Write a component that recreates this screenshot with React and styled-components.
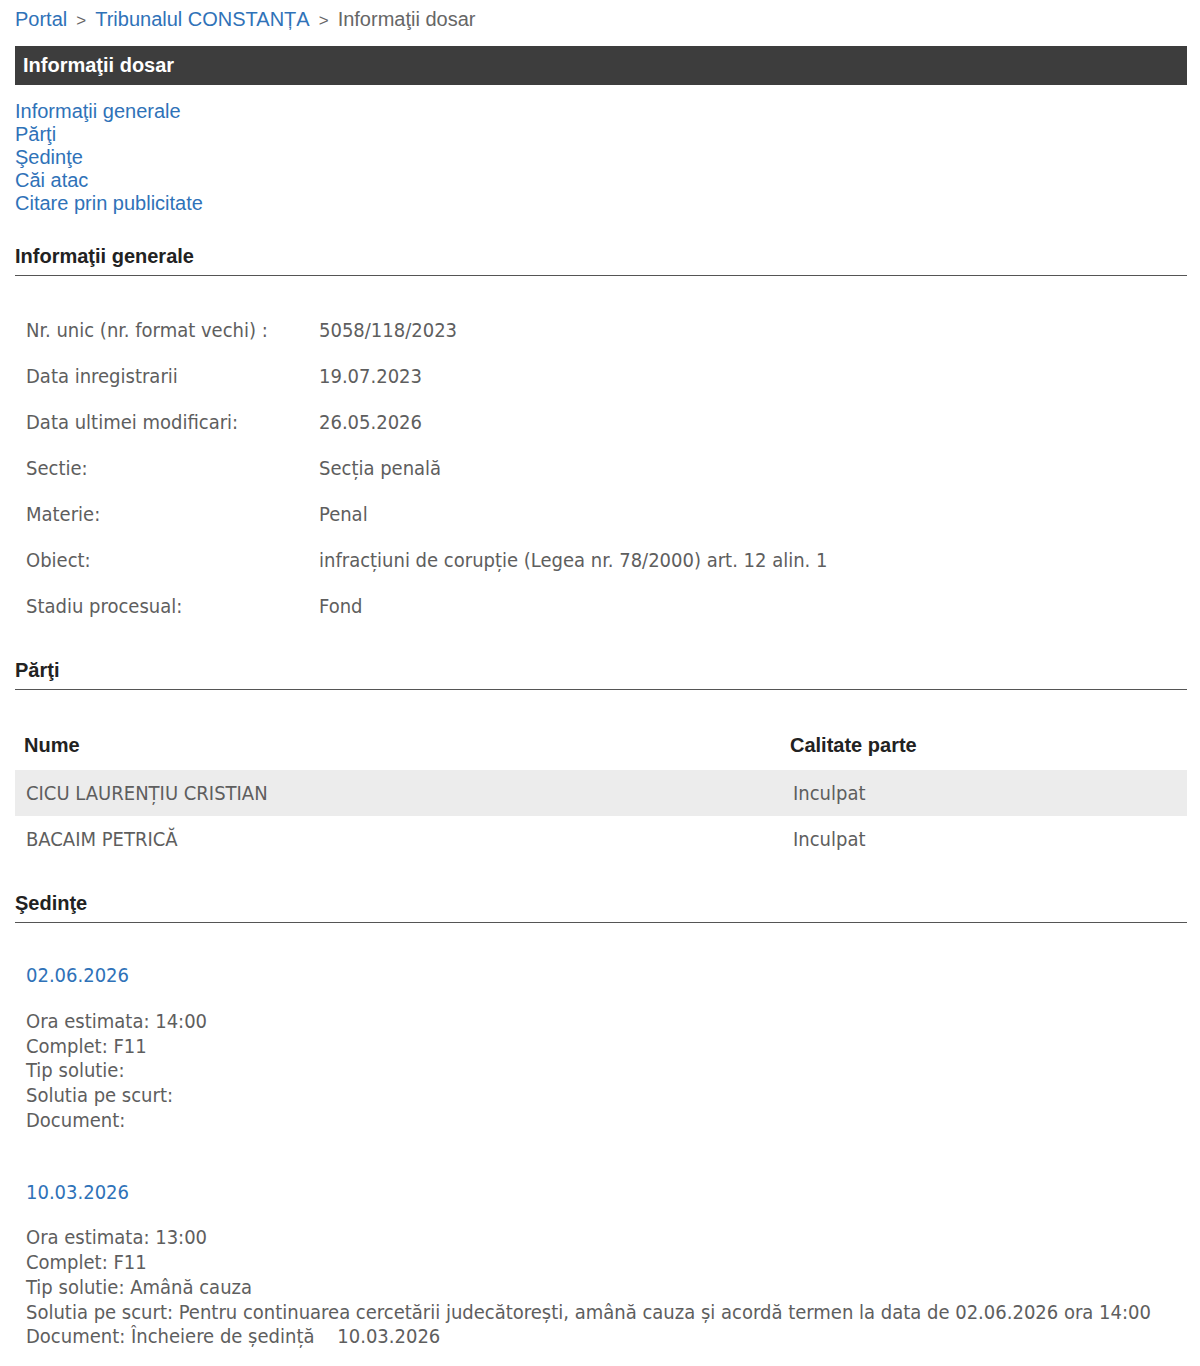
import React from 'react'
import styled, { createGlobalStyle } from 'styled-components'

const GlobalStyle = createGlobalStyle`
  body {
    margin: 0;
    background: #fff;
    font-family: "Liberation Sans", Arial, sans-serif;
  }
`;

const dosar = {
  general: [
    ['Nr. unic (nr. format vechi) :', '5058/118/2023'],
    ['Data inregistrarii', '19.07.2023'],
    ['Data ultimei modificari:', '26.05.2026'],
    ['Sectie:', 'Secția penală'],
    ['Materie:', 'Penal'],
    ['Obiect:', 'infracțiuni de corupție (Legea nr. 78/2000) art. 12 alin. 1'],
    ['Stadiu procesual:', 'Fond'],
  ],
  parti: [
    ['CICU LAURENȚIU CRISTIAN', 'Inculpat'],
    ['BACAIM PETRICĂ', 'Inculpat'],
  ],
  sedinte: [
    {
      data: '02.06.2026',
      ora: '14:00',
      complet: 'F11',
      tip: '',
      solutie: '',
      document: '',
    },
    {
      data: '10.03.2026',
      ora: '13:00',
      complet: 'F11',
      tip: 'Amână cauza',
      solutie: 'Pentru continuarea cercetării judecătorești, amână cauza și acordă termen la data de 02.06.2026 ora 14:00',
      document: 'Încheiere de ședință\u00a0\u00a0\u00a0\u00a010.03.2026',
    },
  ],
};

function Dosar() {
  return (
    <Page>
      <GlobalStyle />
      <Breadcrumb>
        <Crumb href="#">Portal</Crumb>
        <Sep>&gt;</Sep>
        <Crumb href="#">Tribunalul CONSTANȚA</Crumb>
        <Sep>&gt;</Sep>
        <Current>Informaţii dosar</Current>
      </Breadcrumb>

      <TitleBar>Informaţii dosar</TitleBar>

      <Anchors>
        <Crumb href="#general">Informaţii generale</Crumb>
        <Crumb href="#parti">Părţi</Crumb>
        <Crumb href="#sedinte">Şedinţe</Crumb>
        <Crumb href="#cai">Căi atac</Crumb>
        <Crumb href="#citare">Citare prin publicitate</Crumb>
      </Anchors>

      <SectionTitle id="general">Informaţii generale</SectionTitle>
      <InfoTable>
        <tbody>
          {dosar.general.map(([label, value]) => (
            <tr key={label}>
              <InfoLabel>{label}</InfoLabel>
              <InfoValue>{value}</InfoValue>
            </tr>
          ))}
        </tbody>
      </InfoTable>

      <SectionTitle id="parti">Părţi</SectionTitle>
      <PartiTable>
        <thead>
          <tr>
            <HeadCell $w="757px">Nume</HeadCell>
            <HeadCell>Calitate parte</HeadCell>
          </tr>
        </thead>
        <tbody>
          {dosar.parti.map(([nume, calitate], i) => (
            <PartRow key={nume} $striped={i % 2 === 0}>
              <PartCell>{nume}</PartCell>
              <PartCell $shift>{calitate}</PartCell>
            </PartRow>
          ))}
        </tbody>
      </PartiTable>

      <SectionTitle id="sedinte">Şedinţe</SectionTitle>
      {dosar.sedinte.map((s) => (
        <Sedinta key={s.data}>
          <SedintaDate>{s.data}</SedintaDate>
          <SedintaDetails>
            <div>Ora estimata: {s.ora}</div>
            <div>Complet: {s.complet}</div>
            <div>Tip solutie: {s.tip}</div>
            <div>Solutia pe scurt: {s.solutie}</div>
            <div>Document: {s.document}</div>
          </SedintaDetails>
        </Sedinta>
      ))}
    </Page>
  )
}

const Page = styled.div`
  width: 1172px;
  padding: 8px 0 20px 15px;
  font-size: 20px;
  line-height: 23px;
`;

const Breadcrumb = styled.div`
  display: flex;
  align-items: baseline;
  gap: 9px;
`;

const Crumb = styled.a`
  color: #2f72b8;
  text-decoration: none;
`;

const Sep = styled.span`
  color: #666;
  font-size: 17px;
`;

const Current = styled.span`
  color: #666;
`;

const TitleBar = styled.div`
  margin-top: 14px;
  height: 39px;
  padding-left: 8px;
  display: flex;
  align-items: center;
  background: #3d3d3d;
  color: #fff;
  font-weight: bold;
  font-size: 20px;
`;

const Anchors = styled.nav`
  display: flex;
  flex-direction: column;
  align-items: flex-start;
  margin-top: 15px;
`;

const SectionTitle = styled.h3`
  margin: 30px 0 0;
  padding-bottom: 7px;
  border-bottom: 1.5px solid #555;
  color: #222;
  font-size: 20px;
  line-height: 23px;
  font-weight: bold;
`;

const tahoma = `"DejaVu Sans Condensed", Tahoma, sans-serif`;

const InfoTable = styled.table`
  margin-top: 31px;
  border-collapse: collapse;
  font-family: ${tahoma};
  font-size: 20px;
  color: #5e5e5e;
`;

const InfoLabel = styled.td`
  width: 293px;
  height: 46px;
  padding: 0 0 0 11px;
  vertical-align: middle;
`;

const InfoValue = styled.td`
  padding: 0;
  vertical-align: middle;
`;

const PartiTable = styled.table`
  width: 100%;
  margin-top: 31px;
  border-collapse: collapse;
`;

const HeadCell = styled.th`
  width: ${(p) => p.$w || 'auto'};
  height: 49px;
  padding: 0 0 0 9px;
  text-align: left;
  font-weight: bold;
  color: #222;
  vertical-align: middle;
`;

const PartRow = styled.tr`
  background: ${(p) => (p.$striped ? '#ececec' : 'transparent')};
`;

const PartCell = styled.td`
  height: 46px;
  padding: 0 0 0 ${(p) => (p.$shift ? '12px' : '11px')};
  font-family: ${tahoma};
  font-size: 20px;
  color: #5e5e5e;
  vertical-align: middle;
`;

const Sedinta = styled.section`
  padding-left: 11px;
  margin-top: 40px;
  font-family: ${tahoma};
  font-size: 20px;
  line-height: 24.75px;
  & + & {
    margin-top: 47px;
  }
`;

const SedintaDate = styled.div`
  color: #2f72b8;
`;

const SedintaDetails = styled.div`
  margin-top: 21px;
  color: #5e5e5e;
`;

export default function App() {
  return <Dosar />
}
